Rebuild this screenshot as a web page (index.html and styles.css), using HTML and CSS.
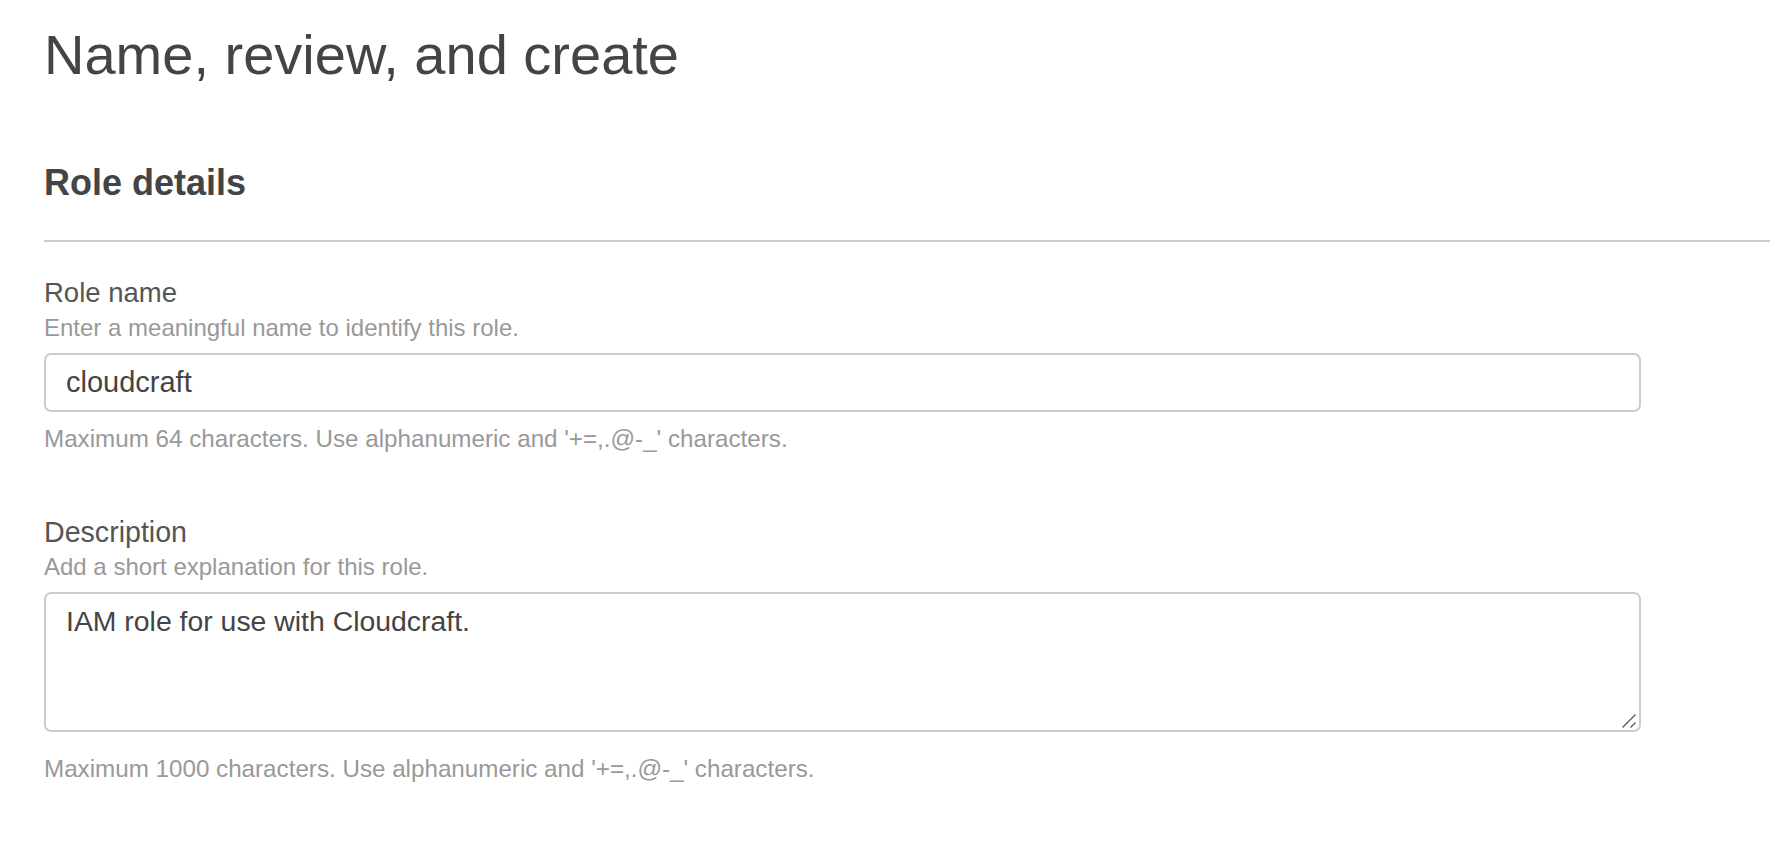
FILE: index.html
```html
<!DOCTYPE html>
<html lang="en">
<head>
<meta charset="utf-8">
<title>Name, review, and create</title>
<link rel="stylesheet" href="styles.css">
</head>
<body>
<main class="page">
  <h1 class="page-title">Name, review, and create</h1>
  <section class="panel">
    <h2 class="panel-title">Role details</h2>
    <div class="panel-body">
      <div class="field field-name">
        <label class="field-label" for="role-name">Role name</label>
        <div class="field-desc">Enter a meaningful name to identify this role.</div>
        <input class="text-input" id="role-name" type="text" value="cloudcraft" spellcheck="false">
        <div class="field-hint hint-name">Maximum 64 characters. Use alphanumeric and '+=,.@-_' characters.</div>
      </div>
      <div class="field field-description">
        <label class="field-label label-desc" for="role-desc">Description</label>
        <div class="field-desc">Add a short explanation for this role.</div>
        <div class="area-wrap">
          <textarea class="text-area" id="role-desc" spellcheck="false">IAM role for use with Cloudcraft.</textarea>
          <svg class="resize-grip" width="16" height="16" viewBox="0 0 16 16" aria-hidden="true">
            <line x1="1.5" y1="14.5" x2="14.5" y2="1.5" stroke="#555" stroke-width="1.3"/>
            <line x1="9.5" y1="14.5" x2="14.5" y2="9.5" stroke="#555" stroke-width="1.3"/>
          </svg>
        </div>
        <div class="field-hint hint-desc">Maximum 1000 characters. Use alphanumeric and '+=,.@-_' characters.</div>
      </div>
    </div>
  </section>
</main>
</body>
</html>
```

FILE: styles.css
```css
html, body {
  margin: 0;
  padding: 0;
  background: #ffffff;
}

body {
  font-family: "Liberation Sans", Arial, Helvetica, sans-serif;
  color: #444444;
}

.page {
  padding: 23px 0 0 44px;
}

.page-title {
  margin: 0;
  font-size: 56px;
  line-height: 64px;
  font-weight: 400;
  color: #444444;
}

.panel {
  margin-top: 76px;
}

.panel-title {
  margin: 0;
  font-size: 36px;
  line-height: 40px;
  font-weight: 700;
  color: #444444;
  padding-bottom: 37px;
  border-bottom: 2px solid #cccccc;
}

.panel-body {
  width: 1597px;
  padding-top: 35px;
}

.field {
  display: flex;
  flex-direction: column;
  align-items: stretch;
}

.field-description {
  margin-top: 61px;
}

.field-label {
  font-size: 27.5px;
  line-height: 32px;
  color: #555555;
}

.label-desc {
  font-size: 28.6px;
}

.field-desc {
  margin-top: 3px;
  font-size: 24px;
  line-height: 32px;
  color: #999999;
}

.text-input,
.text-area {
  box-sizing: border-box;
  width: 100%;
  margin: 9px 0 0 0;
  border: 2px solid #cccccc;
  border-radius: 7px;
  background: #ffffff;
  font-family: "Liberation Sans", Arial, Helvetica, sans-serif;
  color: #444444;
  outline: none;
}

.text-input {
  height: 59px;
  padding: 0 20px;
  font-size: 29px;
}

.area-wrap {
  position: relative;
}

.text-area {
  display: block;
  height: 140px;
  padding: 10px 20px;
  font-size: 28.4px;
  line-height: 34px;
  resize: none;
}

.resize-grip {
  position: absolute;
  right: 4px;
  bottom: 3px;
}

.field-hint {
  font-size: 24.2px;
  line-height: 32px;
  color: #999999;
}

.hint-name {
  margin-top: 11px;
}

.hint-desc {
  margin-top: 21px;
}
```
